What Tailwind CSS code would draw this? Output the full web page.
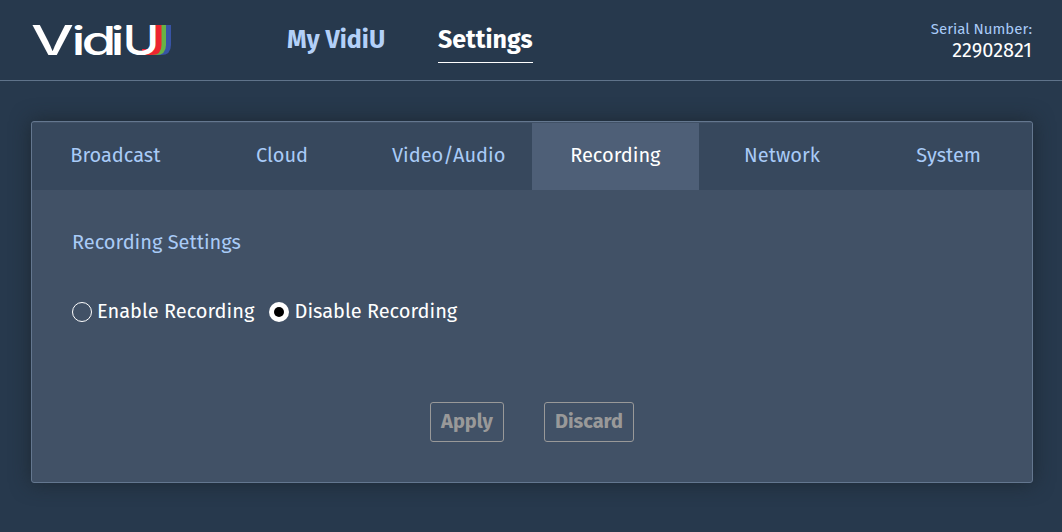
<!DOCTYPE html>
<html lang="en">
<head>
<meta charset="utf-8">
<title>VidiU Settings</title>
<script src="https://cdn.jsdelivr.net/npm/@tailwindcss/browser@4"></script>
</head>
<body class="h-[532px] overflow-hidden bg-[#27394d] font-['Fira_Sans','Noto_Sans',sans-serif] text-xl leading-6 text-white">
<header class="flex h-[81px] items-start border-b border-[#5f738a] pl-8 pr-[30px]">
  <svg class="mt-6 h-8 w-[140px] shrink-0 overflow-visible" viewBox="0 0 140 32" role="img" aria-label="VidiU">
    <g fill="none" stroke-width="6">
      <path stroke="#3854a5" d="M136 1V21Q136 28 129 28H118"/>
      <path stroke="#69b345" d="M131 1V21Q131 28 124 28H114"/>
      <path stroke="#ed2530" d="M126.500 1V21Q126.500 28 120 28H110"/>
    </g>
    <g fill="#fff" font-family="Inter, sans-serif" font-size="41" font-weight="500">
      <text x="-1" y="31" textLength="43" lengthAdjust="spacingAndGlyphs">V</text>
      <text x="39.500" y="31" textLength="14" lengthAdjust="spacingAndGlyphs" font-size="39">i</text>
      <text x="49.500" y="30.500" textLength="35" lengthAdjust="spacingAndGlyphs" font-size="39">d</text>
      <text x="78.500" y="31" textLength="14" lengthAdjust="spacingAndGlyphs" font-size="39">i</text>
      <text x="90.500" y="30.500" textLength="37" lengthAdjust="spacingAndGlyphs">U</text>
    </g>
  </svg>
  <nav class="ml-[115px] mt-[25px] flex gap-[53px] text-[25px] font-bold leading-[30px]">
    <a class="w-[98px] whitespace-nowrap text-[#b3d0f8]">My VidiU</a>
    <a class="h-[38px] w-[95px] whitespace-nowrap border-b border-white">Settings</a>
  </nav>
  <div class="ml-auto mt-[19px] text-right">
    <div class="text-[15px] leading-5 text-[#a9cbf7]">Serial Number:</div>
    <div class="leading-[22px]">22902821</div>
  </div>
</header>
<main class="ml-[31px] mr-[29px] mt-10 h-[362px] rounded-[3px] border border-[#64778f] bg-[#415166] shadow-[0_0_20px_rgba(28,36,42,0.8)]">
  <nav class="mt-px grid h-[67px] grid-cols-6 bg-[#37485d] text-center leading-[64px] text-[#a9cbf7]">
    <a>Broadcast</a>
    <a>Cloud</a>
    <a>Video/Audio</a>
    <a class="bg-[#4e5f77] text-white">Recording</a>
    <a>Network</a>
    <a>System</a>
  </nav>
  <section class="px-10 pt-10">
    <h2 class="text-[#a9cbf7]">Recording Settings</h2>
    <div class="mt-[47px] flex items-center">
      <span class="size-5 rounded-full border border-white"></span>
      <span class="-mt-0.5 ml-[5px] w-[158px] whitespace-nowrap">Enable Recording</span>
      <span class="ml-[14px] flex size-5 items-center justify-center rounded-full bg-white"><span class="size-[10px] rounded-full bg-black"></span></span>
      <span class="-mt-0.5 ml-[5.5px]">Disable Recording</span>
    </div>
    <div class="mt-[79px] flex justify-center gap-10 font-bold leading-[36px] text-[#999]">
      <button class="h-10 w-[74px] rounded-[3px] border border-[#999] pb-0.5">Apply</button>
      <button class="h-10 w-[90px] rounded-[3px] border border-[#999] pb-0.5">Discard</button>
    </div>
  </section>
</main>
</body>
</html>
